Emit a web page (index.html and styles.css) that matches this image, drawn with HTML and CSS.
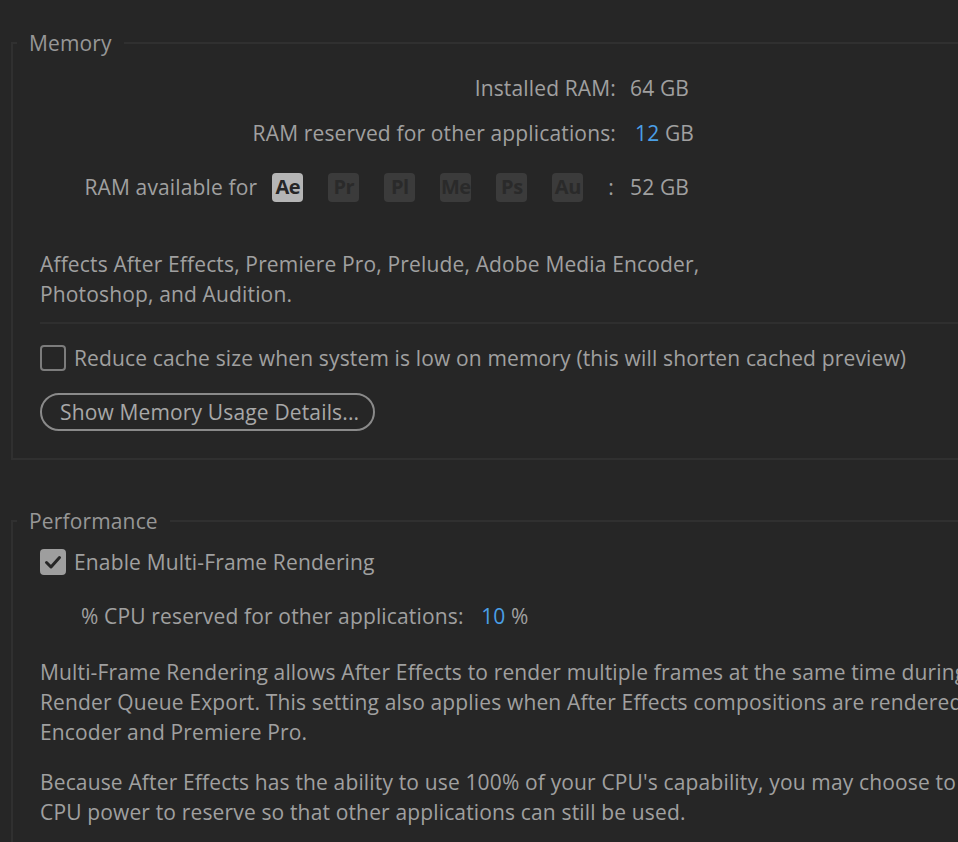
FILE: index.html
```html
<!DOCTYPE html>
<html>
<head>
<meta charset="utf-8">
<link rel="stylesheet" href="styles.css">
</head>
<body>
<div class="page">
  <fieldset class="panel memory">
    <legend class="legend">Memory</legend>
    <div class="kv kv-first">
      <div class="kv-label">Installed RAM:</div>
      <div class="kv-value">64 GB</div>
    </div>
    <div class="kv kv-second">
      <div class="kv-label">RAM reserved for other applications:</div>
      <div class="kv-value kv-value-edit"><span class="blue">12</span> GB</div>
    </div>
    <div class="kv kv-apps">
      <div class="kv-label apps-label">
        <span class="apps-text">RAM available for</span>
        <span class="badge badge-on">Ae</span>
        <span class="badge">Pr</span>
        <span class="badge">Pl</span>
        <span class="badge">Me</span>
        <span class="badge">Ps</span>
        <span class="badge">Au</span>
        <span class="apps-colon">:</span>
      </div>
      <div class="kv-value">52 GB</div>
    </div>
    <p class="note note-affects">Affects After Effects, Premiere Pro, Prelude, Adobe Media Encoder,<br>Photoshop, and Audition.</p>
    <div class="separator"></div>
    <label class="check-row check-row-mem">
      <span class="checkbox"></span>
      <span>Reduce cache size when system is low on memory (this will shorten cached preview)</span>
    </label>
    <button class="pill-btn">Show Memory Usage Details...</button>
  </fieldset>

  <fieldset class="panel performance">
    <legend class="legend">Performance</legend>
    <label class="check-row check-row-perf">
      <span class="checkbox checkbox-on">
        <svg viewBox="0 0 26 26" width="26" height="26"><path d="M6.5 13.5 L11 18 L19.5 8.5" fill="none" stroke="#262626" stroke-width="3" stroke-linecap="round" stroke-linejoin="round"/></svg>
      </span>
      <span>Enable Multi-Frame Rendering</span>
    </label>
    <div class="cpu-row">% CPU reserved for other applications: <span class="blue cpu-val">10</span> %</div>
    <p class="note note-mfr">Multi-Frame Rendering allows After Effects to render multiple frames at the same time during<br>Render Queue Export. This setting also applies when After Effects compositions are rendered from Adobe Media<br>Encoder and Premiere Pro.</p>
    <p class="note note-cpu">Because After Effects has the ability to use 100% of your CPU's capability, you may choose to limit how much<br>CPU power to reserve so that other applications can still be used.</p>
  </fieldset>
</div>
</body>
</html>
```
FILE: styles.css
```css
html, body {
  margin: 0;
  padding: 0;
  background: #262626;
}
.page {
  width: 958px;
  height: 842px;
  overflow: hidden;
  padding-top: 28px;
  box-sizing: border-box;
  font-family: "Open Sans", Lato, sans-serif;
  font-size: 21px;
  letter-spacing: 0.15px;
  line-height: 30px;
  color: #a0a0a0;
}
.panel {
  margin: 0 0 0 11px;
  width: 1200px;
  padding: 0 0 0 27px;
  border: 2px solid #303030;
  box-sizing: border-box;
  min-width: 0;
}
.memory {
  padding-bottom: 27px;
}
.performance {
  margin-top: 46px;
  padding-bottom: 40px;
}
.legend {
  padding: 0 12px;
  color: #979797;
  line-height: 30px;
  margin-left: -23px;
}
.kv {
  display: flex;
  align-items: center;
  height: 30px;
}
.kv-first { margin-top: 15px; }
.kv-second { margin-top: 15px; }
.kv-apps { margin-top: 24px; }
.kv-label {
  width: 576px;
  text-align: right;
  white-space: nowrap;
}
.kv-value {
  margin-left: 14px;
  white-space: nowrap;
}
.kv-value-edit {
  margin-left: 19px;
}
.blue {
  color: #4a9fe6;
}
.apps-label {
  display: flex;
  justify-content: flex-end;
  align-items: center;
}
.apps-text {
  margin-right: 15px;
}
.badge {
  display: inline-flex;
  align-items: center;
  justify-content: center;
  width: 31px;
  height: 29px;
  border-radius: 4px;
  background: #3b3b3b;
  color: #2a2a2a;
  font-weight: 700;
  font-size: 20px;
  letter-spacing: -0.5px;
  margin-right: 25px;
}
.badge-on {
  background: #b5b5b5;
  color: #262626;
}
.apps-colon {
  margin-right: 2px;
}
.note {
  margin: 0;
  white-space: nowrap;
}
.note-affects { margin-top: 47px; }
.separator {
  margin-top: 13px;
  height: 2px;
  background: #2f2f2f;
}
.check-row {
  display: flex;
  align-items: center;
  height: 30px;
  white-space: nowrap;
}
.check-row-mem { margin-top: 19px; }
.check-row-perf { margin-top: 11px; }
.checkbox {
  width: 26px;
  height: 26px;
  box-sizing: border-box;
  border: 2px solid #7c7c7c;
  border-radius: 4px;
  margin-right: 8px;
  flex: none;
  display: flex;
}
.checkbox-on {
  background: #9e9e9e;
  border-color: #9e9e9e;
}
.checkbox-on svg {
  margin: -2px;
}
.pill-btn {
  display: block;
  margin-top: 20px;
  width: 335px;
  height: 38px;
  border: 2px solid #8a8a8a;
  border-radius: 19px;
  background: #262626;
  color: #a8a8a8;
  font-family: inherit;
  font-size: 21px;
  letter-spacing: 0.15px;
  text-align: left;
  padding: 0 0 0 18px;
}
.cpu-row {
  margin-top: 24px;
  padding-left: 41px;
  white-space: nowrap;
}
.cpu-val {
  margin-left: 12px;
}
.note-mfr { margin-top: 26px; }
.note-cpu { margin-top: 20px; }
```
